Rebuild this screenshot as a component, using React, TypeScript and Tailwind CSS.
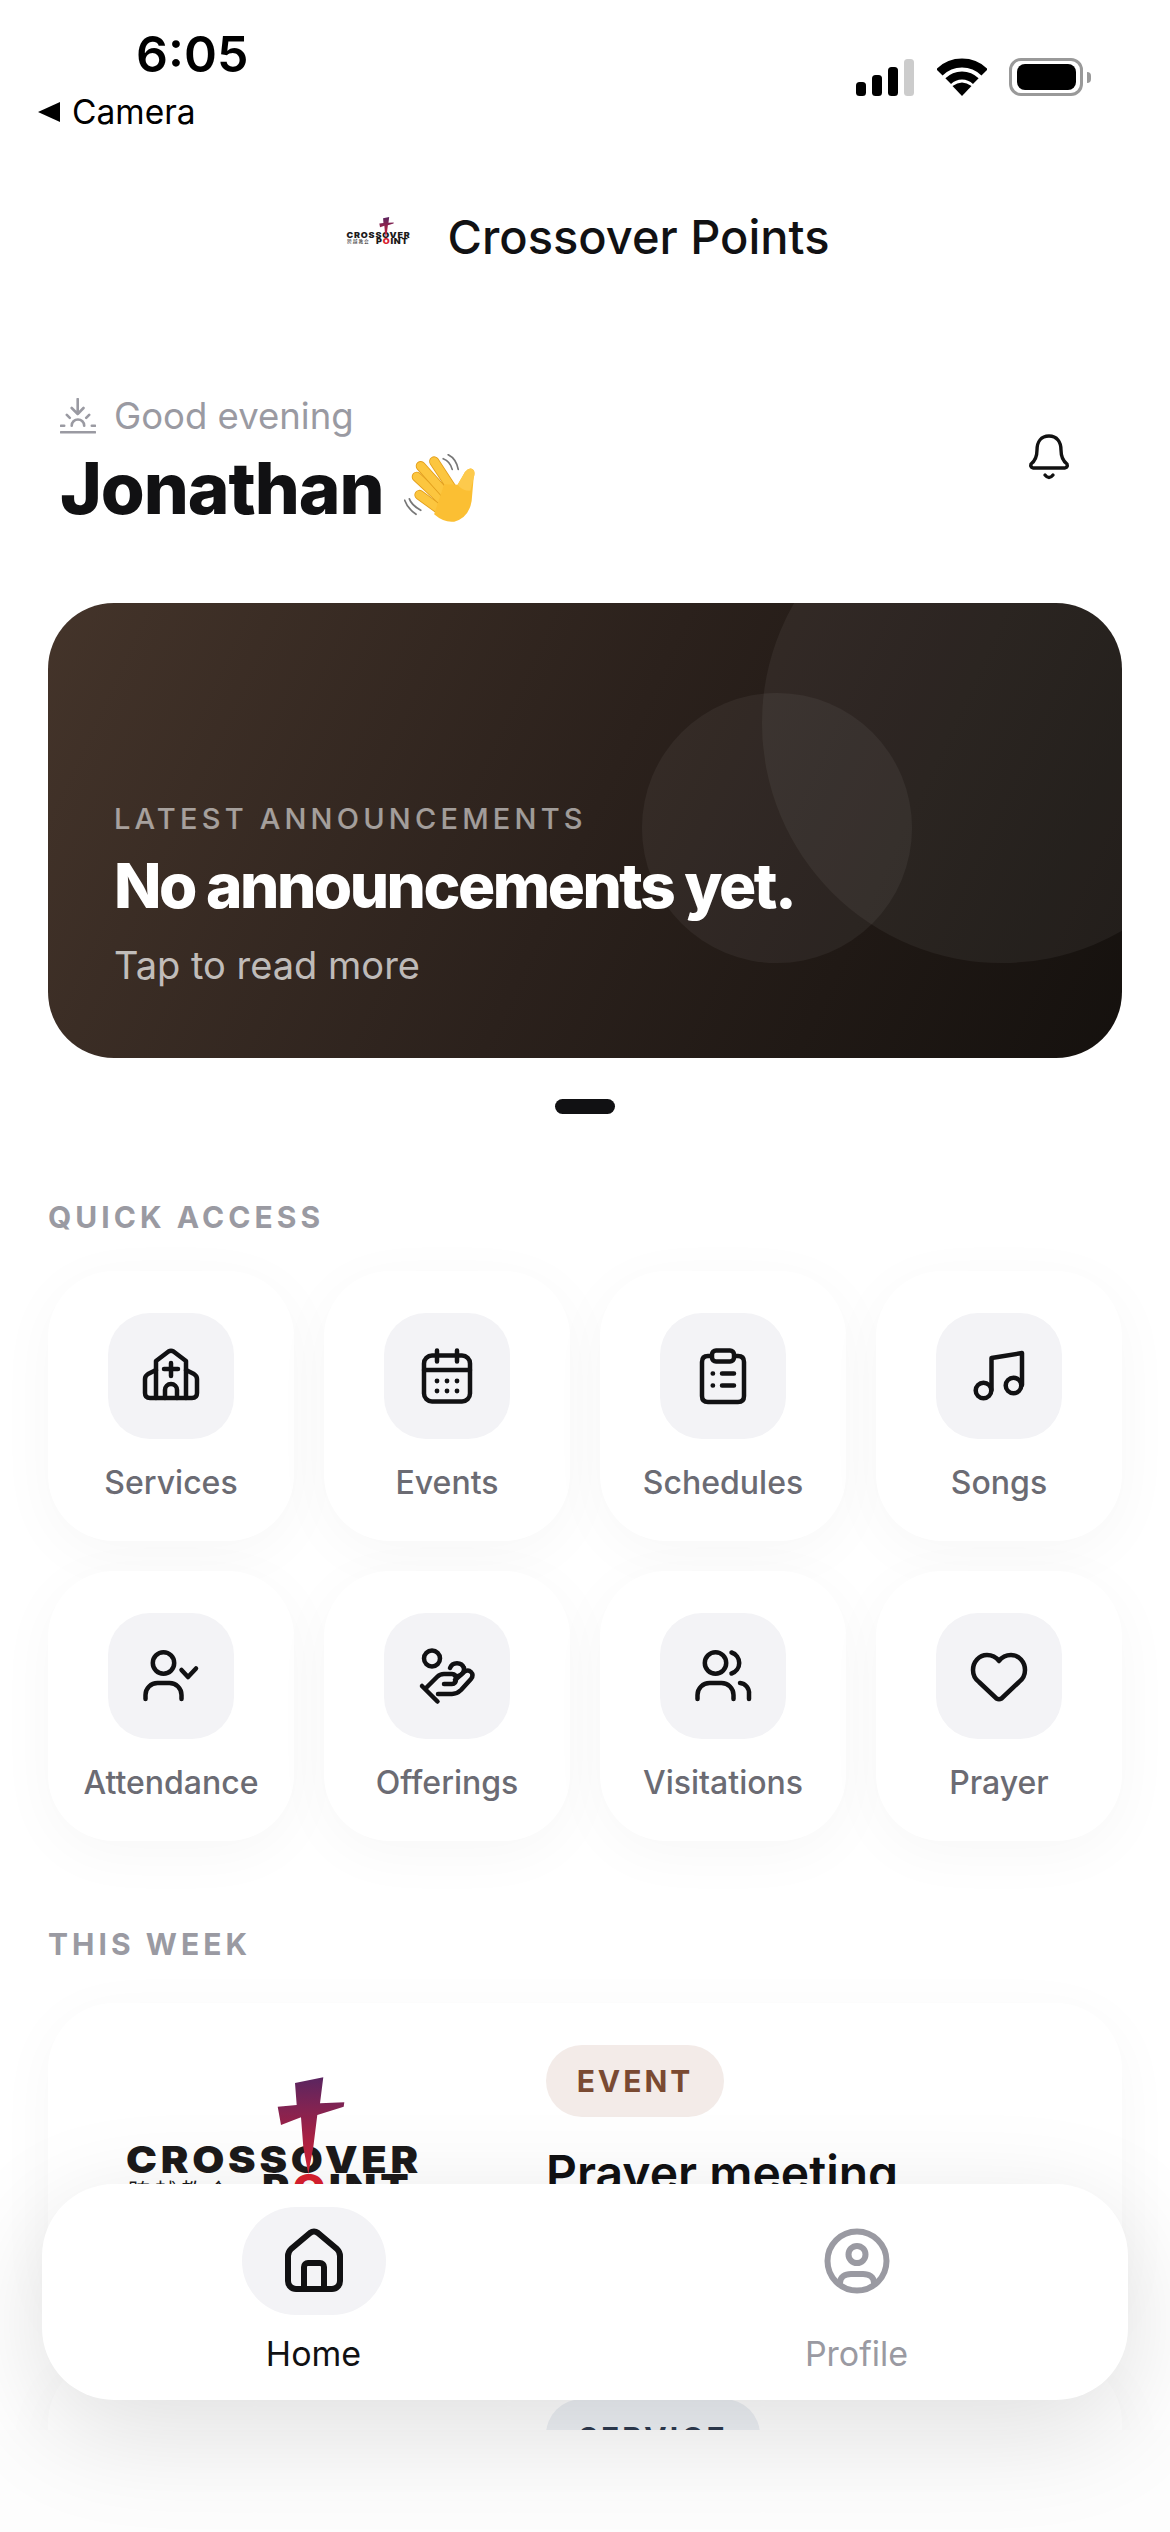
import { FC, ReactNode } from "react";

const Stroke: FC<{ size?: number; width?: number; children: ReactNode }> = ({ size = 66, width = 4.5, children }) => (
	<svg
		width={size}
		height={size}
		viewBox={`0 0 ${size} ${size}`}
		fill="none"
		stroke="currentColor"
		strokeWidth={width}
		strokeLinecap="round"
		strokeLinejoin="round"
	>
		{children}
	</svg>
);

const ChurchIcon = () => (
	<Stroke>
		<path d="M18 55V18L30.5 8.5Q33 7 35.5 8.5L48 18V55" />
		<path d="M18 27L10 31Q7 33 7 36V50Q7 55 12 55H54Q59 55 59 50V36Q59 33 56 31L48 27" />
		<path d="M27 55V47A6 6 0 0 1 39 47V55" />
		<path d="M33 20V33M26 26H40" />
	</Stroke>
);

const CalendarIcon = () => (
	<Stroke>
		<rect x="10" y="12.5" width="46" height="46" rx="8" />
		<path d="M10 27H56M23 7.5V18.5M43 7.5V18.5" />
		<g fill="currentColor" stroke="none">
			<circle cx="23" cy="38" r="2.4" />
			<circle cx="33" cy="38" r="2.4" />
			<circle cx="43" cy="38" r="2.4" />
			<circle cx="23" cy="48" r="2.4" />
			<circle cx="33" cy="48" r="2.4" />
			<circle cx="43" cy="48" r="2.4" />
		</g>
	</Stroke>
);

const ClipboardIcon = () => (
	<Stroke>
		<path d="M21 13H18Q12 13 12 19V53Q12 59 18 59H48Q54 59 54 53V19Q54 13 48 13H45" />
		<rect x="22" y="7.5" width="22" height="11" rx="4" />
		<path d="M32 30.5H44M32 42.5H44M22.7 30.5H23M22.7 42.5H23" />
	</Stroke>
);

const MusicIcon = () => (
	<Stroke>
		<circle cx="17.5" cy="47.5" r="7.8" />
		<circle cx="47.5" cy="42.5" r="7.8" />
		<path d="M25.5 47V15L56 10V42" />
	</Stroke>
);

const AttendanceIcon = () => (
	<Stroke>
		<circle cx="25.5" cy="20" r="10.7" />
		<path d="M7.5 56V52A12 12 0 0 1 19.5 40H31.5A12 12 0 0 1 43.5 52V56" />
		<path d="M43.5 27L50 34L58 25.5" />
	</Stroke>
);

const OfferingIcon = () => (
	<Stroke>
		<circle cx="18" cy="15.5" r="8" />
		<path d="M36 25A7.5 7.5 0 0 1 50 25" />
		<path d="M50 25A7.5 7.5 0 0 1 44 33" />
		<path d="M8 43L23.5 58.5" />
		<path d="M12.5 44.5L23 34Q26 31 30 31H38Q42 31 42 36Q42 41 38 41H30" />
		<path d="M41 37L50 29Q54 26 57 29Q60 32 57 36L47 47Q43 51 38 51H24" />
	</Stroke>
);

const VisitIcon = () => (
	<Stroke>
		<circle cx="25.5" cy="20" r="10.7" />
		<path d="M7.5 56V52A12 12 0 0 1 19.5 40H31.5A12 12 0 0 1 43.5 52V56" />
		<path d="M41.5 9.5A11 11 0 0 1 41.5 30.5" />
		<path d="M50 40A10 10 0 0 1 59 51V56" />
	</Stroke>
);

const HeartIcon = () => (
	<Stroke>
		<path d="M33 18C30 14 26 12 21 12C13 12 7 19 7 27C7 32 9 36 13 39L30.5 55.5Q33 57 35.5 55.5L53 39C57 36 59 32 59 27C59 19 53 12 45 12C40 12 36 14 33 18Z" />
	</Stroke>
);

const HomeIcon = () => (
	<Stroke size={72} width={6}>
		<path d="M10 31C10 28 11 26 13 24L32 8Q36 5 40 8L59 24C61 26 62 28 62 31V56A8 8 0 0 1 54 64H18A8 8 0 0 1 10 56Z" />
		<path d="M26 63V42A4 4 0 0 1 30 38H42A4 4 0 0 1 46 42V63" />
	</Stroke>
);

const ProfileIcon = () => (
	<Stroke size={72} width={6}>
		<circle cx="36" cy="36" r="29.5" />
		<circle cx="36" cy="29.5" r="8.5" />
		<path d="M19 58C19 52 24 49 30 49H42C48 49 53 52 53 58" />
	</Stroke>
);

const SunsetIcon = () => (
	<svg width="36" height="36" viewBox="0 0 36 36" fill="none" stroke="#9a9aa2" strokeWidth="2.6" strokeLinecap="round" strokeLinejoin="round">
		<path d="M1 34.2H35M17.7 1V16M11.7 10L17.7 16L23.5 10" />
		<path d="M11.7 27.7A6.2 6.2 0 0 1 24.2 27.7M6.8 16.8L9.8 19.8M26.2 19.8L29.2 16.8M1 27.7H4.2M31.8 27.7H35" />
	</svg>
);

const BellIcon = () => (
	<svg width="44" height="48" viewBox="0 0 44 48" fill="none" stroke="#111" strokeWidth="3.4" strokeLinecap="round" strokeLinejoin="round">
		<path d="M22 3C14 3 10 9 10 17C10 24 8 28 4 31Q3 34 6 35H38Q41 34 40 31C36 28 34 24 34 17C34 9 30 3 22 3Z" />
		<path d="M18 42Q22 47 26 42" />
	</svg>
);

// no emoji font in the sandbox, so the waving hand is drawn
const WaveHand = () => (
	<svg width="72" height="69" viewBox="1090 190 215 206" fill="none" strokeLinecap="round">
		<g stroke="#777" strokeWidth="5">
			<path d="M1207 204Q1228 212 1234 236" />
			<path d="M1222 192Q1246 204 1252 236" />
			<path d="M1092 328Q1100 352 1126 370" />
			<path d="M1106 324Q1112 342 1140 358" />
		</g>
		<g strokeWidth="30">
			<path d="M1136 312L1210 366" stroke="#e39f1c" />
			<path d="M1136 312L1210 366" stroke="#fcc63f" strokeWidth="25" />
			<path d="M1128 258L1205 330" stroke="#e39f1c" />
			<path d="M1128 258L1205 330" stroke="#fcc63f" strokeWidth="25" />
			<path d="M1140 226L1215 310" stroke="#e39f1c" />
			<path d="M1140 226L1215 310" stroke="#fcc63f" strokeWidth="25" />
			<path d="M1180 212L1235 296" stroke="#e39f1c" />
			<path d="M1180 212L1235 296" stroke="#fcc63f" strokeWidth="25" />
		</g>
		<path d="M1210 280L1250 282Q1262 262 1272 244Q1284 228 1296 236Q1304 242 1298 262L1292 330Q1284 380 1240 392Q1210 396 1180 370Z" fill="#fbbf33" />
		<path d="M1250 282Q1262 262 1272 244Q1284 228 1296 236Q1304 242 1298 262L1288 300Q1262 300 1250 282Z" fill="#fdca4c" />
	</svg>
);

const Logo = () => (
	<div className="relative h-[130px] w-[292px] font-black text-[#1c1a1a]">
		<div className="absolute left-0 top-[64px] w-[292px] scale-x-[1.12] whitespace-nowrap text-center text-[37px] leading-[37px] tracking-[0.09em]">CROSSOVER</div>
		<div className="absolute left-[134px] top-[92px] origin-left scale-x-[1.12] whitespace-nowrap text-[37px] leading-[37px] tracking-[0.09em]">
			P<span className="text-[#d8202f]">O</span>INT
		</div>
		<div className="absolute left-0 top-[98px] whitespace-nowrap font-['Noto_Sans_CJK_SC',sans-serif] text-[22px] font-normal leading-[28px] tracking-[0.2em]">跨越教会</div>
		<svg className="absolute left-0 top-0" width="292" height="130" viewBox="0 0 292 130">
			<defs>
				<linearGradient id="cross" x1="0" y1="0" x2="0" y2="1">
					<stop offset="0" stopColor="#5a2560" />
					<stop offset="1" stopColor="#d81f33" />
				</linearGradient>
			</defs>
			<polygon
				fill="url(#cross)"
				points="167,6 195.3,0.3 192,26.3 216.3,25.3 215.7,29.7 189.3,38 185.3,70 180.3,97 175.3,70 173,40.3 153,48 149.7,29.7 168.7,28"
			/>
		</svg>
	</div>
);

type Tile = { label: string; icon: ReactNode };

const tiles: Tile[] = [
	{ label: "Services", icon: <ChurchIcon /> },
	{ label: "Events", icon: <CalendarIcon /> },
	{ label: "Schedules", icon: <ClipboardIcon /> },
	{ label: "Songs", icon: <MusicIcon /> },
	{ label: "Attendance", icon: <AttendanceIcon /> },
	{ label: "Offerings", icon: <OfferingIcon /> },
	{ label: "Visitations", icon: <VisitIcon /> },
	{ label: "Prayer", icon: <HeartIcon /> },
];

const SectionTitle: FC<{ children: ReactNode }> = ({ children }) => (
	<h2 className="pl-[48px] text-[30px] font-bold leading-[36px] tracking-[0.135em] text-[#9a9aa2]">{children}</h2>
);

const StatusBar = () => (
	<div className="flex h-[130px] shrink-0 items-start justify-between">
		<div className="pl-[38px] pt-[28px] text-black">
			<div className="pl-[98px] text-[50px] font-semibold leading-[52px]">6:05</div>
			<div className="mt-[12px] flex items-center gap-[12px] text-[33.5px] leading-[40px]">
				<svg width="22" height="20" viewBox="0 0 22 20">
					<path d="M22 0V20L0 10Z" fill="#000" />
				</svg>
				Camera
			</div>
		</div>
		<div className="flex items-start pr-[79px] pt-[58px]">
			<svg width="58" height="38" viewBox="0 0 58 38">
				<rect x="0" y="24" width="10" height="14" rx="3.5" fill="#000" />
				<rect x="16" y="17" width="10" height="21" rx="3.5" fill="#000" />
				<rect x="32" y="9" width="10" height="29" rx="3.5" fill="#000" />
				<rect x="48" y="1" width="10" height="37" rx="3.5" fill="#ccc" />
			</svg>
			<svg className="ml-[23px]" width="50" height="38" viewBox="0 0 50 38" fill="none" stroke="#000">
				<path d="M2.4 14.4A32 32 0 0 1 47.6 14.4" strokeWidth="9" />
				<path d="M11.2 23.2A19.5 19.5 0 0 1 38.8 23.2" strokeWidth="8" />
				<path d="M25 38L15.5 28Q25 21 34.5 28Z" fill="#000" stroke="none" />
			</svg>
			<div className="ml-[22px] flex items-center">
				<div className="flex h-[38px] w-[74px] items-center justify-center rounded-[12px] border-[3px] border-[#999]">
					<div className="h-[26px] w-[59px] rounded-[8px] bg-black" />
				</div>
				<div className="ml-[4px] h-[11px] w-[4px] rounded-r-full bg-[#999]" />
			</div>
		</div>
	</div>
);

const App: FC = () => {
	return (
		<div className="relative h-[2532px] w-[1170px] overflow-hidden bg-[#fdfdfd] font-[Inter,sans-serif] text-[#111113]">
			<div className="flex h-[2430px] flex-col overflow-hidden bg-[#ffffff]">
				<StatusBar />

				{/* Title bar */}
				<div className="mt-[57px] flex h-[100px] shrink-0 items-center justify-center">
					<div className="h-[40px] w-[107px] pl-[6px]">
						<div className="h-[30px] w-[66px] origin-top-left scale-[0.216]">
							<Logo />
						</div>
					</div>
					<span className="text-[47px] font-medium leading-[60px]">Crossover Points</span>
				</div>

				{/* Greeting */}
				<div className="mt-[107px] flex shrink-0 items-center justify-between pl-[60px] pr-[99px]">
					<div>
						<div className="flex h-[44px] items-center gap-[18px] text-[36.5px] leading-[44px] text-[#9a9aa2]">
							<SunsetIcon />
							Good evening
						</div>
						<div className="mt-[7px] flex h-[86px] items-center gap-[20px] text-[71px] font-extrabold leading-[86px] tracking-[-0.015em]">
							Jonathan
							<WaveHand />
						</div>
					</div>
					<div className="mb-[12px]">
						<BellIcon />
					</div>
				</div>

				{/* Announcement card */}
				<div className="relative mx-[48px] mt-[72px] flex h-[455px] shrink-0 flex-col justify-end overflow-hidden rounded-[66px] bg-linear-115 from-[#44342a] via-[#2b211c] to-[#15110e] pb-[69px] pl-[66px]">
					<div className="absolute right-[-120px] top-[-120px] h-[480px] w-[480px] rounded-full bg-white/5" />
					<div className="absolute bottom-[95px] right-[210px] h-[270px] w-[270px] rounded-full bg-white/5" />
					<div className="relative text-[29px] font-medium leading-[36px] tracking-[0.145em] text-white/55">LATEST ANNOUNCEMENTS</div>
					<div className="relative mt-[13px] text-[62px] font-extrabold leading-[72px] tracking-[-0.04em] text-white">No announcements yet.</div>
					<div className="relative mt-[19px] text-[38px] leading-[48px] text-white/70">Tap to read more</div>
				</div>

				<div className="mt-[41px] flex shrink-0 justify-center">
					<div className="h-[15px] w-[60px] rounded-full bg-[#111113]" />
				</div>

				{/* Quick access */}
				<div className="mt-[85px] shrink-0">
					<SectionTitle>QUICK ACCESS</SectionTitle>
				</div>
				<div className="mt-[36px] grid shrink-0 grid-cols-4 gap-[30px] px-[48px]">
					{tiles.map((tile) => (
						<div key={tile.label} className="flex h-[270px] flex-col items-center rounded-[66px] bg-white pt-[42px] shadow-[0_12px_60px_rgba(0,0,0,0.035)]">
							<div className="flex h-[126px] w-[126px] items-center justify-center rounded-[42px] bg-[#f3f3f6] text-[#111113]">{tile.icon}</div>
							<div className="mt-[24px] text-[32px] font-medium leading-[40px] text-[#6b6b73]">{tile.label}</div>
						</div>
					))}
				</div>

				{/* This week */}
				<div className="mt-[85px] shrink-0">
					<SectionTitle>THIS WEEK</SectionTitle>
				</div>
				<div className="mx-[48px] mt-[41px] flex h-[324px] shrink-0 rounded-[66px] bg-white pl-[80px] pt-[42px] shadow-[0_12px_60px_rgba(0,0,0,0.035)]">
					<div className="mt-[32px] w-[418px] shrink-0">
						<Logo />
					</div>
					<div>
						<div className="flex h-[72px] w-[178px] items-center justify-center rounded-full bg-[#f3ebe8] text-[30px] font-bold tracking-[0.1em] text-[#7a4a32]">EVENT</div>
						<div className="mt-[26px] text-[48px] font-semibold leading-[60px]">Prayer meeting</div>
					</div>
				</div>
				<div className="mx-[48px] mt-[30px] flex h-[324px] shrink-0 rounded-[66px] bg-white pl-[498px] pt-[42px] shadow-[0_12px_60px_rgba(0,0,0,0.035)]">
					<div className="flex h-[72px] w-[214px] items-center justify-center rounded-full bg-[#edf0f5] pt-[6px] text-[30px] font-bold tracking-[0.1em] text-[#2d3a4f]">SERVICE</div>
				</div>
			</div>

			{/* Floating tab bar */}
			<div className="absolute left-[42px] top-[2184px] grid h-[216px] w-[1086px] grid-cols-2 rounded-[72px] bg-white shadow-[0_30px_110px_rgba(0,0,0,0.13)]">
				<div className="flex flex-col items-center pt-[23px]">
					<div className="flex h-[108px] w-[144px] items-center justify-center rounded-[54px] bg-[#f3f3f6] text-[#111113]">
						<HomeIcon />
					</div>
					<div className="mt-[19px] text-[34px] font-normal leading-[40px] text-[#111113]">Home</div>
				</div>
				<div className="flex flex-col items-center pt-[23px]">
					<div className="flex h-[108px] w-[144px] items-center justify-center text-[#9a9aa2]">
						<ProfileIcon />
					</div>
					<div className="mt-[19px] text-[34px] font-normal leading-[40px] text-[#9a9aa2]">Profile</div>
				</div>
			</div>
		</div>
	);
};

export default App;
